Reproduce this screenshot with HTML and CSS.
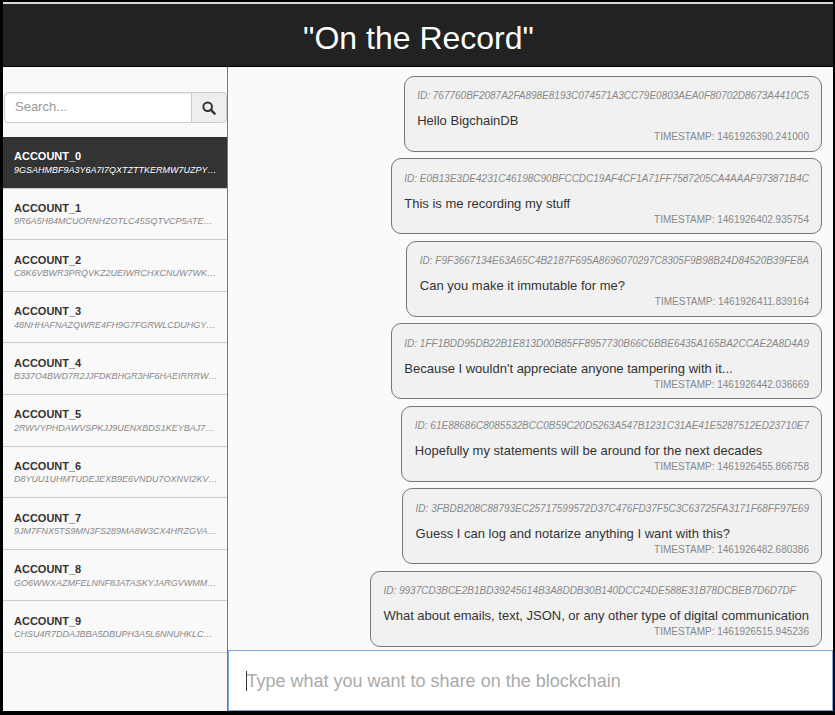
FILE: index.html
```html
<!DOCTYPE html>
<html lang="en">
<head>
<meta charset="utf-8">
<title>On the Record</title>
<link rel="stylesheet" href="styles.css">
</head>
<body>
<div class="app">
  <header class="topbar"><h1>"On the Record"</h1></header>
  <div class="main">
    <aside class="sidebar">
      <div class="search">
        <div class="search-input">Search...</div>
        <div class="search-btn">
          <svg width="14" height="14" viewBox="0 0 14 14" aria-hidden="true"><circle cx="5.7" cy="5.7" r="4.3" fill="none" stroke="#333" stroke-width="2"/><path d="M8.9 8.9 L12.6 12.6" stroke="#333" stroke-width="2.5" stroke-linecap="round"/></svg>
        </div>
      </div>
      <ul class="accounts">
        <li class="account active"><div class="name">ACCOUNT_0</div><div class="key">9GSAHMBF9A3Y6A7I7QXTZTTKERMW7UZPY…</div></li>
        <li class="account"><div class="name">ACCOUNT_1</div><div class="key">9R6A5H84MCUORNHZOTLC45SQTVCP5ATE…</div></li>
        <li class="account"><div class="name">ACCOUNT_2</div><div class="key">C8K6VBWR3PRQVKZ2UEIWRCHXCNUW7WK…</div></li>
        <li class="account"><div class="name">ACCOUNT_3</div><div class="key">48NHHAFNAZQWRE4FH9G7FGRWLCDUHGY…</div></li>
        <li class="account"><div class="name">ACCOUNT_4</div><div class="key">B337O4BWD7R2JJFDKBHGR3HF6HAEIRRRW…</div></li>
        <li class="account"><div class="name">ACCOUNT_5</div><div class="key">2RWVYPHDAWVSPKJJ9UENXBDS1KEYBAJ7…</div></li>
        <li class="account"><div class="name">ACCOUNT_6</div><div class="key">D8YUU1UHMTUDEJEXB9E6VNDU7OXNVI2KV…</div></li>
        <li class="account"><div class="name">ACCOUNT_7</div><div class="key">9JM7FNX5TS9MN3FS289MA8W3CX4HRZGVA…</div></li>
        <li class="account"><div class="name">ACCOUNT_8</div><div class="key">GO6WWXAZMFELNNF8JATASKYJARGVWMM…</div></li>
        <li class="account"><div class="name">ACCOUNT_9</div><div class="key">CHSU4R7DDAJBBA5DBUPH3A5L6NNUHKLC…</div></li>
      </ul>
    </aside>
    <section class="chat">
      <div class="messages">
        <article class="bubble"><div class="id">ID: 767760BF2087A2FA898E8193C074571A3CC79E0803AEA0F80702D8673A4410C5</div><div class="text">Hello BigchainDB</div><div class="time">TIMESTAMP: 1461926390.241000</div></article>
        <article class="bubble"><div class="id">ID: E0B13E3DE4231C46198C90BFCCDC19AF4CF1A71FF7587205CA4AAAF973871B4C</div><div class="text">This is me recording my stuff</div><div class="time">TIMESTAMP: 1461926402.935754</div></article>
        <article class="bubble"><div class="id">ID: F9F3667134E63A65C4B2187F695A8696070297C8305F9B98B24D84520B39FE8A</div><div class="text">Can you make it immutable for me?</div><div class="time">TIMESTAMP: 1461926411.839164</div></article>
        <article class="bubble"><div class="id">ID: 1FF1BDD95DB22B1E813D00B85FF8957730B66C6BBE6435A165BA2CCAE2A8D4A9</div><div class="text">Because I wouldn't appreciate anyone tampering with it...</div><div class="time">TIMESTAMP: 1461926442.036669</div></article>
        <article class="bubble"><div class="id">ID: 61E88686C8085532BCC0B59C20D5263A547B1231C31AE41E5287512ED23710E7</div><div class="text">Hopefully my statements will be around for the next decades</div><div class="time">TIMESTAMP: 1461926455.866758</div></article>
        <article class="bubble"><div class="id">ID: 3FBDB208C88793EC25717599572D37C476FD37F5C3C63725FA3171F68FF97E69</div><div class="text">Guess I can log and notarize anything I want with this?</div><div class="time">TIMESTAMP: 1461926482.680386</div></article>
        <article class="bubble"><div class="id">ID: 9937CD3BCE2B1BD39245614B3A8DDB30B140DCC24DE588E31B78DCBEB7D6D7DF</div><div class="text">What about emails, text, JSON, or any other type of digital communication</div><div class="time">TIMESTAMP: 1461926515.945236</div></article>
      </div>
      <div class="composer"><span class="placeholder">Type what you want to share on the blockchain</span></div>
    </section>
  </div>
</div>
</body>
</html>
```

FILE: styles.css
```css
* { box-sizing: border-box; }
html, body { margin: 0; height: 100%; }
body {
  background: #000;
  font-family: "Liberation Sans", Arial, sans-serif;
  color: #333;
  overflow: hidden;
}
.app {
  display: flex;
  flex-direction: column;
  height: 715px;
  padding: 2px 2px 4px 3px;
}
.topbar {
  height: 65px;
  flex: none;
  background: #222;
  border-top: 2px solid #d8d8d8;
  border-bottom: 1px solid #000;
  padding: 8px 0 0 1px;
  display: flex;
  align-items: center;
  justify-content: center;
}
.topbar h1 {
  margin: 0;
  color: #fff;
  font-size: 32px;
  font-weight: 400;
  line-height: 1.1;
}
.main {
  flex: 1;
  min-height: 0;
  display: flex;
  background: #fafafa;
}
.sidebar {
  flex: none;
  width: 225px;
  border-right: 1px solid #777;
  background: #f9f9f9;
  padding-top: 25px;
}
.search {
  display: flex;
  height: 31px;
  margin: 0 0 14px 0.6px;
  width: 223.4px;
}
.search-input {
  flex: 1;
  background: #fff;
  border: 1px solid #ccc;
  border-radius: 4px 0 0 4px;
  padding: 5px 10.4px;
  font-size: 13px;
  line-height: 17px;
  color: #999;
  box-shadow: inset 0 1px 1px rgba(0,0,0,.075);
}
.search-btn {
  flex: none;
  width: 36px;
  margin-left: -1px;
  background: #eee;
  border: 1px solid #ccc;
  border-radius: 0 4px 4px 0;
  display: flex;
  align-items: center;
  justify-content: center;
}
.accounts {
  list-style: none;
  margin: 0;
  padding: 0;
}
.account {
  height: 51.6px;
  padding: 12.4px 10px 0 11px;
  border-bottom: 1px solid #ccc;
}
.account.active {
  background: #333;
  color: #fff;
}
.name {
  font-size: 11px;
  font-weight: 700;
  line-height: 14px;
}
.key {
  font-size: 9px;
  font-style: italic;
  line-height: 11px;
  margin-top: 1.5px;
  color: #888;
  white-space: nowrap;
}
.account.active .key { color: #fff; }
.chat {
  flex: 1;
  min-width: 0;
  display: flex;
  flex-direction: column;
}
.messages {
  flex: 1;
  min-height: 0;
  padding: 8.9px 11px 0 0;
  display: flex;
  flex-direction: column;
  align-items: flex-end;
  gap: 6.5px;
}
.bubble {
  height: 76px;
  flex: none;
  padding: 6.2px 12px 0 12.5px;
  background: #f1f1f1;
  border: 1px solid #777;
  border-radius: 10px;
}
.id {
  font-size: 10px;
  font-style: italic;
  line-height: 26px;
  color: #888;
  white-space: nowrap;
}
.text {
  font-size: 13px;
  line-height: 19px;
  margin-top: 2px;
  white-space: nowrap;
}
.time {
  font-size: 10px;
  line-height: 14px;
  color: #888;
  text-align: right;
}
.composer {
  flex: none;
  height: 61px;
  margin-top: 3px;
  background: #fff;
  border: 1px solid #7ea6e0;
  padding: 20px 0 0 17px;
  font-size: 18px;
  line-height: 20px;
  color: #aaa;
}
.placeholder {
  display: inline-block;
  border-left: 1px solid #333;
  height: 20px;
  text-indent: -0.5px;
}
```
